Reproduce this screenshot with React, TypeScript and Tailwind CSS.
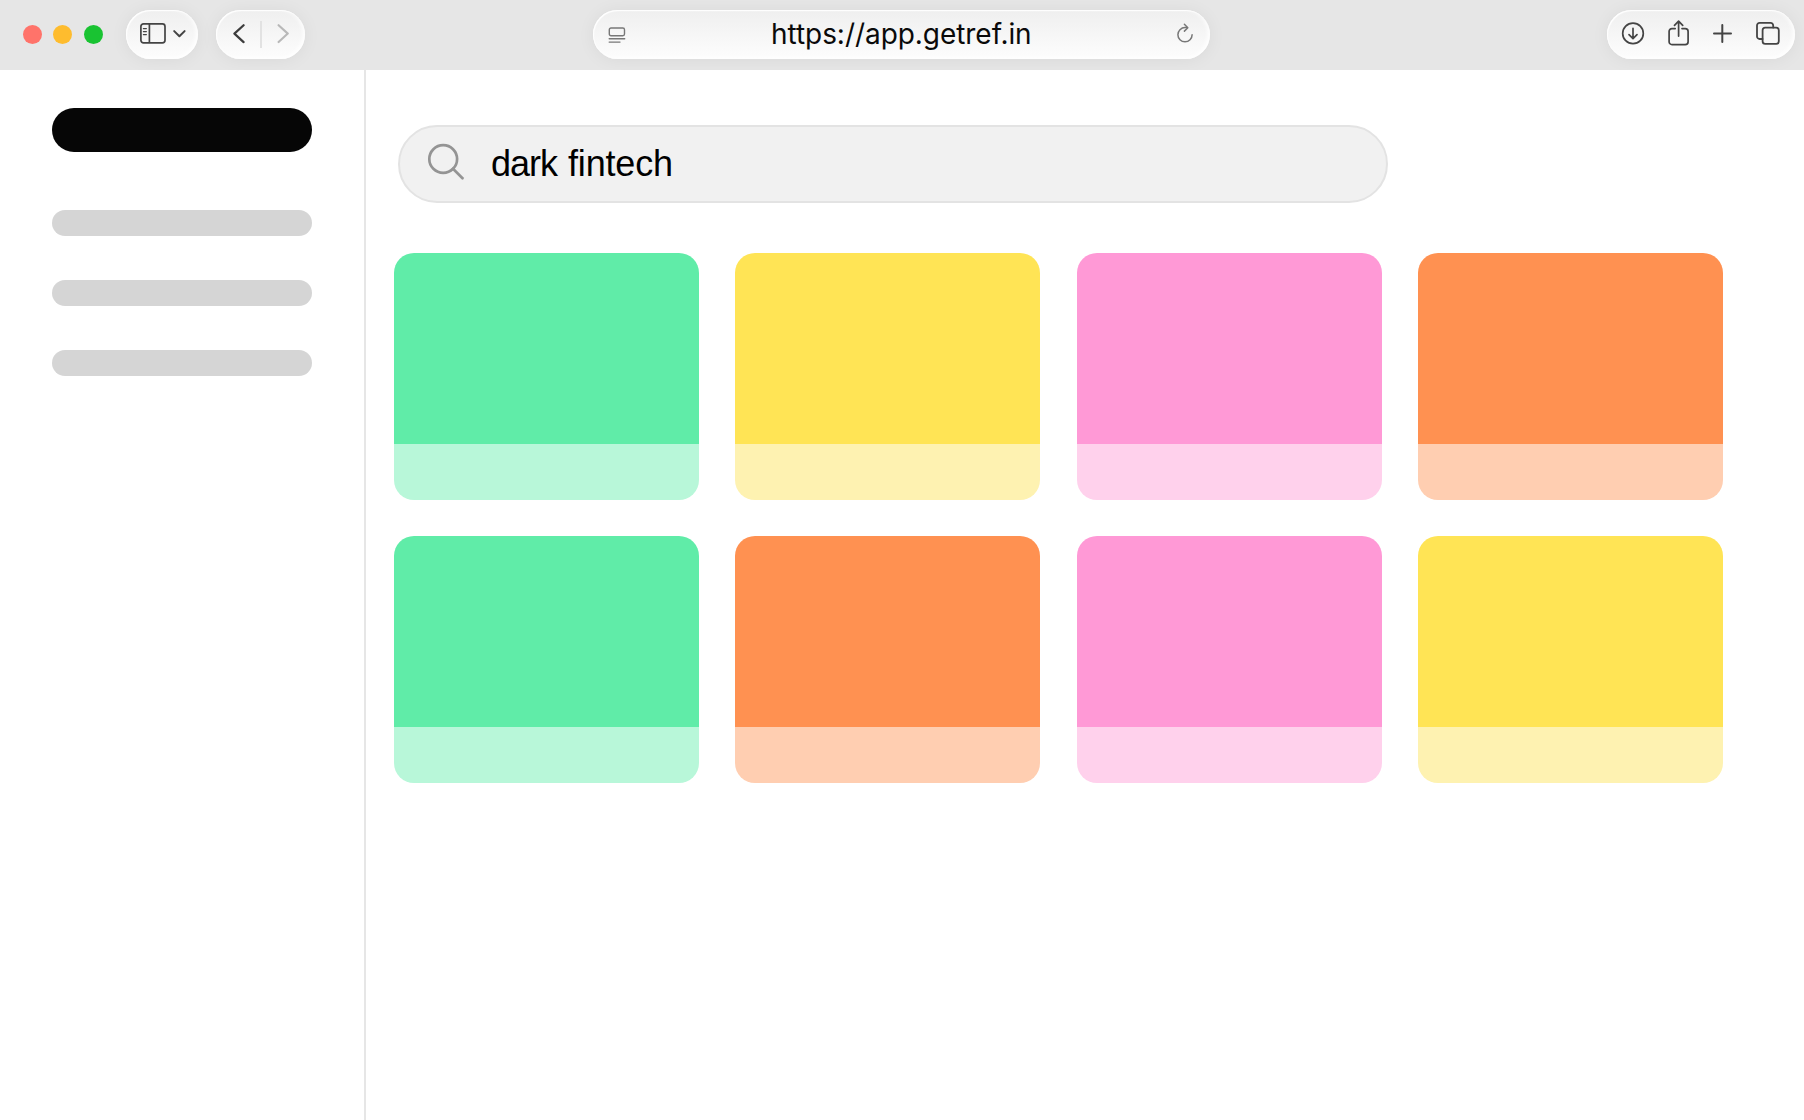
import { ReactNode } from "react";
import clsx from "clsx";

interface Shot {
  top: string;
  bottom: string;
}

const green: Shot = { top: "bg-[#60eca8]", bottom: "bg-[#b8f7d9]" };
const yellow: Shot = { top: "bg-[#ffe455]", bottom: "bg-[#fef2b1]" };
const pink: Shot = { top: "bg-[#ff99d6]", bottom: "bg-[#ffd1ec]" };
const orange: Shot = { top: "bg-[#ff9151]", bottom: "bg-[#ffceb1]" };

const shots: Shot[] = [green, yellow, pink, orange, green, orange, pink, yellow];

const Pill = ({ className, children }: { className: string; children: ReactNode }) => (
  <div
    className={clsx(
      "flex h-[49px] shrink-0 items-start rounded-full bg-linear-to-b from-[#efefef] to-[#fdfdfd] shadow-[0_1px_18px_rgba(0,0,0,0.06),inset_1px_1px_1px_#ffffff,inset_-2px_-1px_4px_#ffffff]",
      className,
    )}
  >
    {children}
  </div>
);

const PanelIcon = () => (
  <svg className="mt-[13px] ml-[14px] h-[21px] w-[26px]" viewBox="0 0 26 21" fill="none" stroke="#444" strokeWidth="1.7">
    <rect x="0.9" y="0.9" width="24.1" height="18.9" rx="2.6" />
    <path d="M9.4 1v19" />
    <path d="M3.4 5.6h3M3.4 8.6h3M3.4 11.6h3" strokeWidth="1.2" strokeLinecap="round" />
  </svg>
);

const ChevronDown = () => (
  <svg className="mt-5 ml-[7px] h-[8px] w-[13px]" viewBox="0 0 13 8" fill="none" stroke="#444" strokeWidth="2" strokeLinecap="round" strokeLinejoin="round">
    <path d="M1.2 1.1l5.2 5.2 5.2-5.2" />
  </svg>
);

const BackIcon = () => (
  <svg className="mt-[14px] ml-[17px] h-5 w-3" viewBox="0 0 12 20" fill="none" stroke="#3c3c3c" strokeWidth="2.2" strokeLinecap="round" strokeLinejoin="round">
    <path d="M10.6 1.2L1.4 9.6l9.2 8.5" />
  </svg>
);

const ForwardIcon = () => (
  <svg className="mt-[14px] ml-[15px] h-5 w-3" viewBox="0 0 12 20" fill="none" stroke="#b8b8b8" strokeWidth="2.1" strokeLinecap="round" strokeLinejoin="round">
    <path d="M1.6 1.2l9.2 8.4-9.2 8.5" />
  </svg>
);

const ReaderIcon = () => (
  <svg className="mt-[17px] ml-[15px] h-[17px] w-[18px]" viewBox="0 0 18 17" fill="none" stroke="#777" strokeWidth="1.4" strokeLinecap="round">
    <rect x="1.3" y="1" width="15.2" height="7.8" rx="1.7" />
    <path d="M1.2 11.7h15.5M1.2 15.1h10.8" />
  </svg>
);

const ReloadIcon = () => (
  <svg className="mt-[13px] mr-4 h-5 w-[18px]" viewBox="0 0 18 20" fill="none" stroke="#777" strokeWidth="1.5" strokeLinecap="round" strokeLinejoin="round">
    <path d="M11.2 4.6H9A7.1 7.1 0 1 0 16.1 11.7" />
    <path d="M8.4 1.3l3.4 3.4-3.4 3.4" />
  </svg>
);

const DownloadIcon = () => (
  <svg className="mt-3 ml-[14px] h-6 w-6" viewBox="0 0 24 24" fill="none" stroke="#444" strokeWidth="1.7" strokeLinecap="round" strokeLinejoin="round">
    <circle cx="12" cy="11.4" r="10.3" />
    <path d="M12 6.3v10M8 12.7l4 3.9 4-3.9" />
  </svg>
);

const ShareIcon = () => (
  <svg className="mt-[10px] ml-[23px] h-[26px] w-[21px]" viewBox="0 0 21 26" fill="none" stroke="#444" strokeWidth="1.7" strokeLinecap="round" strokeLinejoin="round">
    <path d="M7.2 8.6H4a2.9 2.9 0 0 0-2.9 2.9v10.2A2.9 2.9 0 0 0 4 24.6h13.2a2.9 2.9 0 0 0 2.9-2.9V11.5a2.9 2.9 0 0 0-2.9-2.9H14" />
    <path d="M10.6 16.1V1.4M6.5 5.3l4.1-4.1 4.1 4.1" />
  </svg>
);

const PlusIcon = () => (
  <svg className="mt-[14px] ml-6 h-[19px] w-[19px]" viewBox="0 0 19 19" fill="none" stroke="#444" strokeWidth="2" strokeLinecap="round">
    <path d="M9.3 1v17M1 9.4h17" />
  </svg>
);

const TabsIcon = () => (
  <svg className="mt-3 ml-6 h-[23px] w-6" viewBox="0 0 24 23" fill="none" stroke="#444" strokeWidth="1.8" strokeLinecap="round">
    <path d="M6.5 17H3.6A2.6 2.6 0 0 1 1 14.4V3.5A2.6 2.6 0 0 1 3.6.9h11a2.6 2.6 0 0 1 2.6 2.6v2" />
    <rect x="6.6" y="5.7" width="16.2" height="16.2" rx="2.6" />
  </svg>
);

const BrowserBar = () => (
  <header className="flex h-[70px] shrink-0 overflow-hidden bg-[#e6e6e6] pt-[10px]">
    <div className="mt-[15px] ml-[22.5px] flex gap-[11.5px]">
      <div className="h-[19px] w-[19px] rounded-full bg-[#ff736a]" />
      <div className="h-[19px] w-[19px] rounded-full bg-[#febc2e]" />
      <div className="h-[19px] w-[19px] rounded-full bg-[#19c332]" />
    </div>

    <Pill className="ml-[23.5px] w-[72px]">
      <PanelIcon />
      <ChevronDown />
    </Pill>

    <Pill className="ml-[18px] w-[89px]">
      <BackIcon />
      <div className="mt-[11px] ml-[15px] h-[27px] w-[2px] bg-[#e2e2e2]" />
      <ForwardIcon />
    </Pill>

    <Pill className="ml-[288px] w-[617px]">
      <ReaderIcon />
      <p className="ml-[145px] h-[49px] flex-1 font-['Inter',sans-serif] text-[28px] leading-[49px] tracking-[-0.05px] text-[#0a0a0a]">
        https://app.getref.in
      </p>
      <ReloadIcon />
    </Pill>

    <Pill className="ml-[397px] w-[188px]">
      <DownloadIcon />
      <ShareIcon />
      <PlusIcon />
      <TabsIcon />
    </Pill>
  </header>
);

const Sidebar = () => (
  <aside className="w-[366px] shrink-0 border-r-2 border-[#e6e6e6] pt-[38px] pl-[52px]">
    <div className="h-11 w-[260px] rounded-full bg-[#060606]" />
    <div className="mt-[58px] flex flex-col gap-11">
      <div className="h-[26px] w-[260px] rounded-full bg-[#d5d5d5]" />
      <div className="h-[26px] w-[260px] rounded-full bg-[#d5d5d5]" />
      <div className="h-[26px] w-[260px] rounded-full bg-[#d5d5d5]" />
    </div>
  </aside>
);

const SearchBar = () => (
  <div className="ml-[3.5px] flex h-[78px] w-[990px] items-start rounded-full border-2 border-[#e3e3e3] bg-[#f1f1f1]">
    <svg className="mt-[16px] ml-[27px] h-[38px] w-[38px]" viewBox="0 0 38 38" fill="none" stroke="#949494" strokeWidth="2.7" strokeLinecap="round">
      <circle cx="16.2" cy="16" r="13.9" />
      <path d="M26 25.800l9.500 9.500" />
    </svg>
    <p className="ml-[26px] font-['Liberation_Sans',sans-serif] text-[36px] leading-[74px] tracking-[-1px] [word-spacing:2px] text-black">
      dark <span className="tracking-[-0.15px]">fintech</span>
    </p>
  </div>
);

const ShotCard = ({ top, bottom }: Shot) => (
  <div className="h-[247px] overflow-hidden rounded-[20px]">
    <div className={clsx("h-[191px]", top)} />
    <div className={clsx("h-[56px]", bottom)} />
  </div>
);

export default function App() {
  return (
    <div className="flex h-[1120px] w-[1804px] flex-col overflow-hidden bg-white">
      <BrowserBar />
      <div className="flex flex-1">
        <Sidebar />
        <main className="flex-1 pt-[55px] pl-[28.4px]">
          <SearchBar />
          <div className="mt-[50px] grid grid-cols-[repeat(4,305px)] gap-x-[36.1px] gap-y-[36px]">
            {shots.map((shot, i) => (
              <ShotCard key={i} {...shot} />
            ))}
          </div>
        </main>
      </div>
    </div>
  );
}
